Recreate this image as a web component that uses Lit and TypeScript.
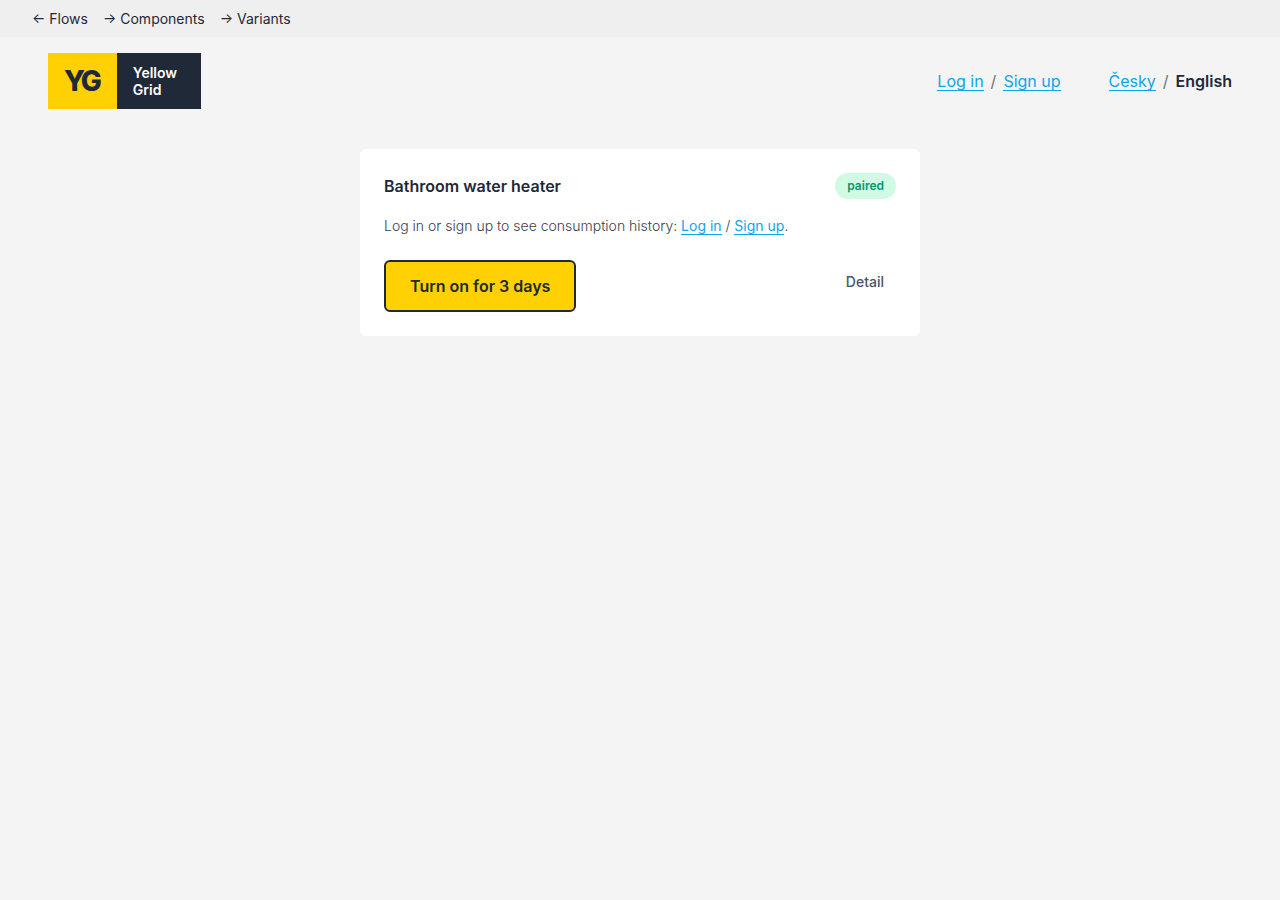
import { LitElement, html, css } from "lit";
import { customElement } from "lit/decorators.js";

@customElement("app-root")
class AppRoot extends LitElement {
  static styles = css`
    :host {
      display: block;
      min-height: 100vh;
      background: #f4f4f4;
      color: #1f2937;
      font-family: Inter, "Liberation Sans", sans-serif;
      font-size: 16px;
      line-height: 24px;
    }
    * { box-sizing: border-box; }
    .topbar {
      display: flex;
      gap: 15px;
      padding: 9px 32px 8px;
      background: #efefef;
      font-size: 14px;
      line-height: 20px;
      font-weight: 400;
    }
    .topbar a { color: inherit; text-decoration: none; }
    .header {
      display: flex;
      align-items: center;
      justify-content: space-between;
      padding: 16px 48px;
    }
    .logo {
      display: flex;
      height: 56px;
      color: inherit;
      text-decoration: none;
    }
    .mark {
      display: flex;
      align-items: center;
      padding: 0 18px 0 16px;
      background: #ffd103;
      font-size: 28px;
      font-weight: 800;
      letter-spacing: -3px;
    }
    .name {
      display: flex;
      flex-direction: column;
      justify-content: center;
      padding: 0 24px 0 16px;
      background: #1f2937;
      color: #fff;
      font-size: 14px;
      line-height: 17px;
      font-weight: 600;
    }
    .menus { display: flex; gap: 48px; }
    .menu { display: flex; gap: 7px; }
    .slash { color: #6b7280; }
    .link {
      color: #0ea5e9;
      font-weight: 400;
      text-decoration: none;
      border-bottom: 1px solid;
    }
    .menu .link { line-height: 20px; height: 20px; margin-top: 2px; }
    .current { font-weight: 600; }
    .card {
      max-width: 560px;
      margin: 24px auto 0;
      padding: 24px;
      background: #fff;
      border-radius: 6px;
    }
    .row { display: flex; align-items: center; justify-content: space-between; }
    h1 { margin: 0; font-size: 16px; line-height: 24px; font-weight: 600; }
    .badge {
      padding: 5px 12px;
      border-radius: 13px;
      background: #d1fae5;
      color: #059669;
      font-size: 12px;
      line-height: 16px;
      font-weight: 600;
    }
    .note { margin: 16px 0 24px; font-size: 14px; line-height: 21px; font-weight: 300; color: #374151; }
    .actions { display: flex; align-items: flex-start; justify-content: space-between; }
    button { font-family: inherit; cursor: pointer; }
    .primary {
      padding: 12px 24px;
      border: 2px solid #1f2937;
      border-radius: 6px;
      background: #ffd103;
      color: #1f2937;
      font-size: 16px;
      line-height: 24px;
      font-weight: 600;
    }
    .plain {
      padding: 12px;
      border: 0;
      background: none;
      color: #4b5563;
      font-size: 14px;
      line-height: 20px;
      font-weight: 500;
    }
  `;

  render() {
    return html`
      <nav class="topbar">
        <a href="#flows">← Flows</a>
        <a href="#components">→ Components</a>
        <a href="#variants">→ Variants</a>
      </nav>
      <header class="header">
        <a class="logo" href="#home">
          <span class="mark">YG</span>
          <span class="name"><span>Yellow</span><span>Grid</span></span>
        </a>
        <div class="menus">
          <nav class="menu">
            <a class="link" href="#login">Log in</a>
            <span class="slash">/</span>
            <a class="link" href="#signup">Sign up</a>
          </nav>
          <nav class="menu">
            <a class="link" href="#cs">Česky</a>
            <span class="slash">/</span>
            <span class="current">English</span>
          </nav>
        </div>
      </header>
      <main class="card">
        <div class="row">
          <h1>Bathroom water heater</h1>
          <span class="badge">paired</span>
        </div>
        <p class="note">Log in or sign up to see consumption history: <a class="link" href="#login">Log in</a> / <a class="link" href="#signup">Sign up</a>.</p>
        <div class="actions">
          <button class="primary">Turn on for 3 days</button>
          <button class="plain">Detail</button>
        </div>
      </main>
    `;
  }
}
